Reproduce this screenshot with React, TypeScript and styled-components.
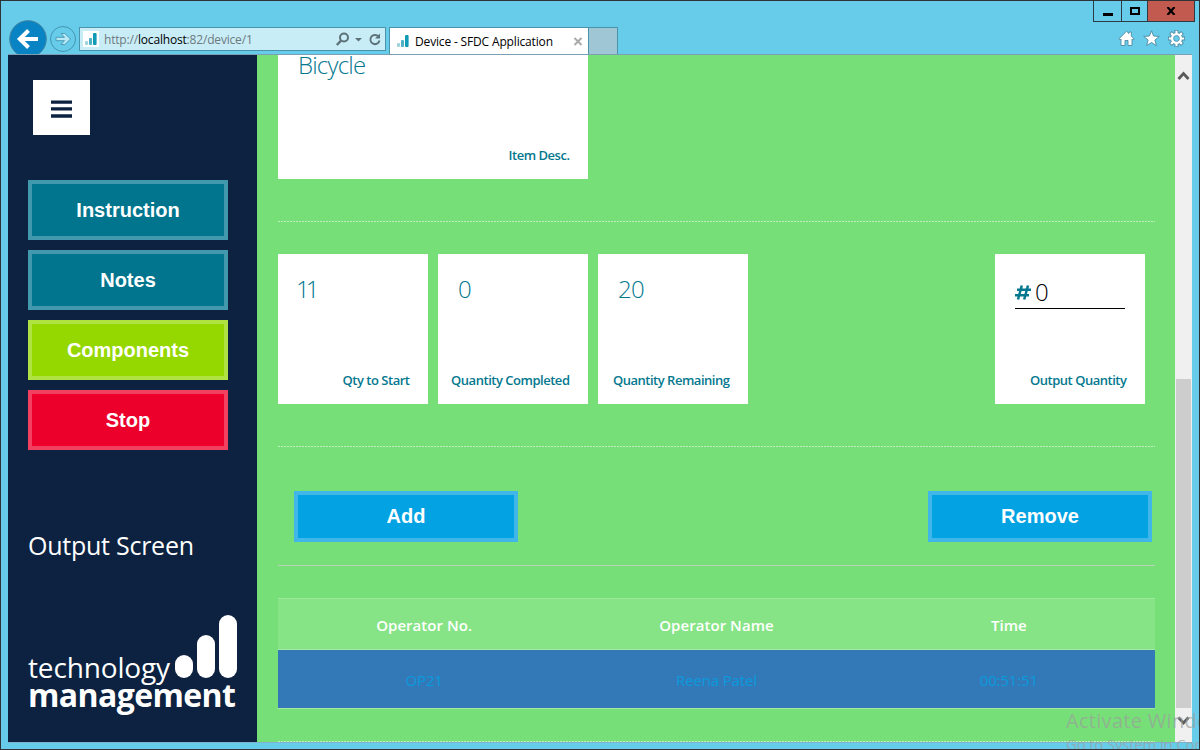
import React from 'react';
import styled, { createGlobalStyle } from 'styled-components';

const ui = '"Segoe UI", "Open Sans", "Noto Sans", sans-serif';

const GlobalStyle = createGlobalStyle`
  * { box-sizing: border-box; }
  html, body { margin: 0; padding: 0; overflow: hidden; }
  body { font-family: ${ui}; }
  button { margin: 0; padding: 0; font: inherit; }
`;

const Window = styled.div`
  position: relative;
  width: 1200px;
  height: 750px;
  padding: 0 7px 7px;
  border: 1px solid #2e3338;
  background: #67cbea;
  overflow: hidden;
  display: flex;
  flex-direction: column;
`;

const Chrome = styled.header`
  height: 54px;
  flex: none;
  display: flex;
  border-bottom: 1px solid #7b9fb5;
`;

const NavButtons = styled.div`
  width: 71px;
  height: 53px;
  flex: none;
  padding: 19px 0 0 1px;
  display: flex;
  gap: 3px;
  overflow: hidden;
  & > svg { flex: none; }
`;

const AddressBar = styled.div`
  width: 307px;
  height: 24px;
  margin-top: 26px;
  padding: 0 4px 0 3px;
  border: 1px solid #4a93ab;
  background: #c9edf7;
  display: flex;
  align-items: center;
`;

const Favicon = styled.span`
  width: 16px;
  height: 16px;
  background: #fff;
  display: flex;
  align-items: center;
  justify-content: center;
`;

const Url = styled.span`
  flex: 1;
  margin-left: 5px;
  padding-top: 2px;
  font-size: 12px;
  line-height: 22px;
  letter-spacing: -0.18px;
  color: #6d7a80;
  white-space: nowrap;
  b { font-weight: 400; color: #000; }
`;

const Tab = styled.div`
  width: 200px;
  height: 27px;
  margin: 26px 0 0 3px;
  padding: 0 5px 0 7px;
  border: 1px solid #4a93ab;
  border-bottom: 0;
  background: #fff;
  display: flex;
  align-items: center;
`;

const TabTitle = styled.span`
  flex: 1;
  margin-left: 6px;
  padding-top: 2px;
  font-size: 12px;
  line-height: 24px;
  letter-spacing: -0.16px;
  color: #000;
  white-space: nowrap;
`;

const NewTab = styled.div`
  width: 29px;
  height: 27px;
  margin-top: 26px;
  border: 1px solid #4a93ab;
  border-width: 1px 1px 0 0;
  background: #9fc6d5;
`;

const ChromeRight = styled.div`
  margin-left: auto;
  margin-right: -3px;
  display: flex;
  flex-direction: column;
  align-items: flex-end;
`;

const WindowControls = styled.div`
  display: flex;
  height: 21px;
  border: 1px solid #2c3a44;
  border-top: 0;
`;

const Control = styled.span<{ $width: number; $close?: boolean }>`
  width: ${p => p.$width}px;
  background: ${p => (p.$close ? '#c35a50' : 'transparent')};
  border-left: ${p => (p.$width === 27 ? 0 : 1)}px solid #2c3a44;
  display: flex;
  align-items: center;
  justify-content: center;
`;

const Tools = styled.div`
  display: flex;
  gap: 8px;
  margin: 8px 10px 0 0;
`;

const Page = styled.div`
  flex: 1;
  min-height: 0;
  display: flex;
  border-bottom: 1px solid #7fb3cc;
  margin-bottom: -1px;
`;

const Sidebar = styled.aside`
  width: 249px;
  flex: none;
  padding: 25px 20px 0;
  background: #0c2240;
  display: flex;
  flex-direction: column;
`;

const MenuButton = styled.button`
  width: 57px;
  height: 55px;
  margin-left: 5px;
  padding-top: 3px;
  border: 0;
  background: #fff;
  display: flex;
  align-items: center;
  justify-content: center;
`;

const SideNav = styled.nav`
  margin-top: 45px;
  display: flex;
  flex-direction: column;
  gap: 10px;
`;

const ActionButton = styled.button<{ $bg: string; $edge: string; $w: number; $h: number }>`
  width: ${p => p.$w}px;
  height: ${p => p.$h}px;
  border: 4px solid ${p => p.$edge};
  padding-bottom: ${p => (p.$h === 51 ? 1 : 0)}px;
  background: ${p => p.$bg};
  color: #fff;
  font: bold 20px/24px "Liberation Sans", Arial, sans-serif;
`;

const ScreenTitle = styled.h1`
  margin: 77px 0 0;
  font-size: 25px;
  line-height: 36px;
  font-weight: 400;
  letter-spacing: -0.25px;
  color: #fff;
  white-space: nowrap;
`;

const Logo = styled.div`
  margin-top: 52px;
  color: #fff;
`;

const LogoTop = styled.div`
  height: 63px;
  display: flex;
  justify-content: space-between;
  width: 209px;
`;

const LogoLight = styled.span`
  align-self: flex-end;
  font-size: 28px;
  line-height: 34px;
  margin-bottom: -6px;
  font-weight: 400;
  letter-spacing: -0.15px;
`;

const LogoBold = styled.div`
  font-size: 32px;
  line-height: 34px;
  font-weight: 700;
  letter-spacing: -0.6px;
`;

const Main = styled.main`
  flex: 1;
  padding: 0 20px 0 21px;
  background: #77df77;
  overflow: hidden;
`;

const Rule = styled.hr<{ $solid?: boolean }>`
  height: 1px;
  margin: 0;
  border: 0;
  background: ${p => (p.$solid
    ? '#b9d2b9'
    : 'repeating-linear-gradient(90deg, #c0f0c0 0 2px, #77df77 2px 3px)')};
`;

const ItemRow = styled.section`
  height: 166px;
`;

const CardRow = styled.section`
  height: 224px;
  padding: 32px 10px 0 0;
  display: flex;
  gap: 10px;
`;

const Card = styled.article<{ $w: number; $h: number; $end?: boolean }>`
  width: ${p => p.$w}px;
  height: ${p => p.$h}px;
  margin-left: ${p => (p.$end ? 'auto' : 0)};
  padding: 0 18.5px 13px 20px;
  background: #fff;
  color: #04788f;
  display: flex;
  flex-direction: column;
  justify-content: space-between;
`;

const Value = styled.div<{ $top: number; $ls?: number }>`
  margin-top: ${p => p.$top}px;
  margin-left: ${p => (p.$ls ? -2 : 0)}px;
  font-size: 24px;
  line-height: 32px;
  font-weight: 300;
  letter-spacing: ${p => p.$ls ?? -0.8}px;
`;

const Label = styled.div`
  align-self: flex-end;
  font-size: 13px;
  line-height: 22px;
  font-weight: 600;
  letter-spacing: -0.48px;
  white-space: nowrap;
`;

const QuantityField = styled.div`
  width: 110px;
  height: 33px;
  margin-top: 22px;
  border-bottom: 1px solid #000;
  display: flex;
  align-items: center;
  gap: 4px;
  font-size: 24px;
  line-height: 32px;
  font-weight: 300;
  color: #000;
`;

const Actions = styled.section`
  height: 118px;
  padding: 44px 3px 0 16px;
  display: flex;
  justify-content: space-between;
`;

const Table = styled.table`
  width: 877px;
  margin: 32px 0;
  border-collapse: separate;
  border-spacing: 0;
  table-layout: fixed;
  text-align: center;
  border-top: 1px solid #9de89d;
  th, td { padding: 0; border-bottom: 1px solid #a5e8a5; font-size: 15px; }
  th { height: 51px; padding-top: 2px; background: #86e486; color: #fff; font-weight: 600; letter-spacing: 0.05px; }
  td { height: 59px; padding-top: 2px; background: #3379b7; color: #0a9ade; letter-spacing: -0.15px; }
`;

const Scrollbar = styled.div`
  width: 17px;
  flex: none;
  background: #f0f0f0;
  display: flex;
  flex-direction: column;
  align-items: center;
  padding: 16px 0 16px;
`;

const Thumb = styled.div`
  width: 15px;
  height: 329px;
  margin: auto 0 8px;
  background: #cdcdcd;
`;

const Watermark = styled.div`
  position: absolute;
  left: 1065px;
  top: 706px;
  color: rgba(155, 160, 158, 0.7);
  white-space: nowrap;
  font-size: 20px;
  line-height: 28px;
  letter-spacing: 0.3px;
  small { display: block; margin-top: -1px; font-size: 15px; line-height: 20px; letter-spacing: -0.2px; }
`;

const Bars = ({ size }: { size: number }) => (
  <svg width={size} height={size} viewBox="0 0 12 12">
    <rect x="0" y="8" width="3" height="4" rx="1" fill="#9ed3dc" />
    <rect x="4" y="5" width="3" height="7" rx="1" fill="#4db0c4" />
    <rect x="8" y="0" width="3.6" height="12" rx="1" fill="#0f9ab5" />
  </svg>
);

const Chevron = ({ down }: { down?: boolean }) => (
  <svg width="13" height="10" viewBox="0 0 13 10">
    <path d={down ? 'M1.5 1.5 6.5 7l5-5.5' : 'M1.5 8 6.5 2.5l5 5.5'} fill="none" stroke="#5a5a5a" strokeWidth="2.8" />
  </svg>
);

const teal = { $bg: '#02758e', $edge: '#4298ac' };
const sky = { $bg: '#02a2e3', $edge: '#40b7e8' };

export default function App() {
  return (
    <>
      <GlobalStyle />
      <Window>
        <Chrome>
          <NavButtons>
            <svg width="38" height="38" viewBox="0 0 38 38">
              <circle cx="19" cy="19" r="18.3" fill="#0884c4" stroke="#41839f" />
              <path d="M29 19H11M19.5 10.500 10.800 19l8.700 8.500" fill="none" stroke="#fff" strokeWidth="4" />
            </svg>
            <svg width="27" height="38" viewBox="0 0 27 38">
              <circle cx="13" cy="19" r="12.5" fill="none" stroke="#4596b0" />
              <path d="M6 17.3h8.500L11 13.500h3.800l5.700 5.500-5.700 5.500H11l3.500-3.800H6z" fill="#b9e8f6" stroke="#4596b0" strokeWidth=".9" />
            </svg>
          </NavButtons>
          <AddressBar>
            <Favicon><Bars size={12} /></Favicon>
            <Url>http://<b>localhost</b>:82/device/1</Url>
            <svg width="46" height="16" viewBox="0 0 46 16">
              <circle cx="9" cy="6.5" r="4" fill="none" stroke="#5d7179" strokeWidth="2" />
              <path d="M6 9.600 1.800 14" stroke="#5d7179" strokeWidth="2.300" />
              <path d="M20 7h7l-3.500 3.600z" fill="#5d7179" />
              <path d="M43.600 5.700A4.600 4.600 0 1 0 44.500 9.500" fill="none" stroke="#5d7179" strokeWidth="1.900" />
              <path d="M45 2.500v5h-5z" fill="#5d7179" />
            </svg>
          </AddressBar>
          <Tab>
            <Bars size={12} />
            <TabTitle>Device - SFDC Application</TabTitle>
            <svg width="10" height="9" viewBox="0 0 10 9">
              <path d="m1.500 1 7 7M8.500 1l-7 7" stroke="#aaa" strokeWidth="2" />
            </svg>
          </Tab>
          <NewTab />
          <ChromeRight>
            <WindowControls>
              <Control $width={27}>
                <svg width="10" height="12"><path d="M0 8h10v3H0z" /></svg>
              </Control>
              <Control $width={26}>
                <svg width="10" height="8"><path d="M1 1h8v6H1z" fill="none" stroke="#000" strokeWidth="2" /></svg>
              </Control>
              <Control $width={47} $close>
                <svg width="10" height="8"><path d="m1.500 0 7 8M8.500 0l-7 8" stroke="#000" strokeWidth="2.200" /></svg>
              </Control>
            </WindowControls>
            <Tools>
              <svg width="17" height="17" viewBox="0 0 17 17">
                <path d="M8.500 1.200 11 3.600V2h2.300v4l2.900 3-1 1-1.200-1v6.500h-4v-5H7v5H3V9l-1.200 1-1-1z" fill="#fff" stroke="#4a8ba3" strokeWidth=".9" />
              </svg>
              <svg width="17" height="17" viewBox="0 0 17 17">
                <path d="m8.500.8 2.100 5.200 5.700.4-4.400 3.600 1.500 5.600-4.900-3.100-4.900 3.100 1.500-5.600L.7 6.400 6.400 6z" fill="#fff" stroke="#4a8ba3" strokeWidth=".9" />
              </svg>
              <svg width="17" height="17" viewBox="0 0 17 17">
                <g stroke="#4a8ba3" strokeWidth="4">
                  <path d="M8.500 0v17M0 8.500h17M2.500 2.500l12 12M14.500 2.500l-12 12" />
                </g>
                <circle cx="8.500" cy="8.500" r="6.300" fill="#4a8ba3" />
                <g stroke="#fff" strokeWidth="2.200">
                  <path d="M8.500.8v15.400M.8 8.500h15.400M3.100 3.100l10.800 10.800M13.900 3.100 3.100 13.900" />
                </g>
                <circle cx="8.500" cy="8.500" r="5.500" fill="#fff" />
                <circle cx="8.500" cy="8.500" r="2.900" fill="#67cbea" stroke="#4a8ba3" strokeWidth=".8" />
              </svg>
            </Tools>
          </ChromeRight>
        </Chrome>
        <Page>
          <Sidebar>
            <MenuButton aria-label="Menu">
              <svg width="21" height="18" viewBox="0 0 21 18">
                <path d="M0 .5h21v3.300H0zM0 7.300h21v3.300H0zM0 14.200h21v3.500H0z" fill="#0c2240" />
              </svg>
            </MenuButton>
            <SideNav>
              <ActionButton {...teal} $w={200} $h={60}>Instruction</ActionButton>
              <ActionButton {...teal} $w={200} $h={60}>Notes</ActionButton>
              <ActionButton $bg="#95d800" $edge="#b0e242" $w={200} $h={60}>Components</ActionButton>
              <ActionButton $bg="#ec002b" $edge="#f14060" $w={200} $h={60}>Stop</ActionButton>
            </SideNav>
            <ScreenTitle>Output Screen</ScreenTitle>
            <Logo>
              <LogoTop>
                <LogoLight>technology</LogoLight>
                <svg width="62" height="63" viewBox="0 0 62 63" fill="#fff">
                  <rect x="0" y="40" width="18" height="23" rx="9" />
                  <rect x="22" y="20" width="18" height="43" rx="9" />
                  <rect x="44" y="0" width="18" height="63" rx="9" />
                </svg>
              </LogoTop>
              <LogoBold>management</LogoBold>
            </Logo>
          </Sidebar>
          <Main>
            <ItemRow>
              <Card $w={310} $h={124}>
                <Value $top={-6}>Bicycle</Value>
                <Label>Item Desc.</Label>
              </Card>
            </ItemRow>
            <Rule />
            <CardRow>
              <Card $w={150} $h={150}>
                <Value $top={19} $ls={-4}>11</Value>
                <Label>Qty to Start</Label>
              </Card>
              <Card $w={150} $h={150}>
                <Value $top={19}>0</Value>
                <Label>Quantity Completed</Label>
              </Card>
              <Card $w={150} $h={150}>
                <Value $top={19}>20</Value>
                <Label>Quantity Remaining</Label>
              </Card>
              <Card $w={150} $h={150} $end>
                <QuantityField>
                  <svg width="16" height="15" viewBox="0 0 16 15">
                    <path d="M6.800.5 3 14.500M13 .5 9.200 14.500M2 4.700h14M0 10.300h14" fill="none" stroke="#04788f" strokeWidth="2.500" />
                  </svg>
                  0
                </QuantityField>
                <Label>Output Quantity</Label>
              </Card>
            </CardRow>
            <Rule />
            <Actions>
              <ActionButton {...sky} $w={224} $h={51}>Add</ActionButton>
              <ActionButton {...sky} $w={224} $h={51}>Remove</ActionButton>
            </Actions>
            <Rule $solid />
            <Table>
              <thead>
                <tr><th>Operator No.</th><th>Operator Name</th><th>Time</th></tr>
              </thead>
              <tbody>
                <tr><td>OP21</td><td>Reena Patel</td><td>00:51:51</td></tr>
              </tbody>
            </Table>
            <Rule />
          </Main>
          <Scrollbar>
            <Chevron />
            <Thumb />
            <Chevron down />
          </Scrollbar>
        </Page>
        <Watermark>
          Activate Windows
          <small>Go to System in Control Panel</small>
        </Watermark>
      </Window>
    </>
  );
}
